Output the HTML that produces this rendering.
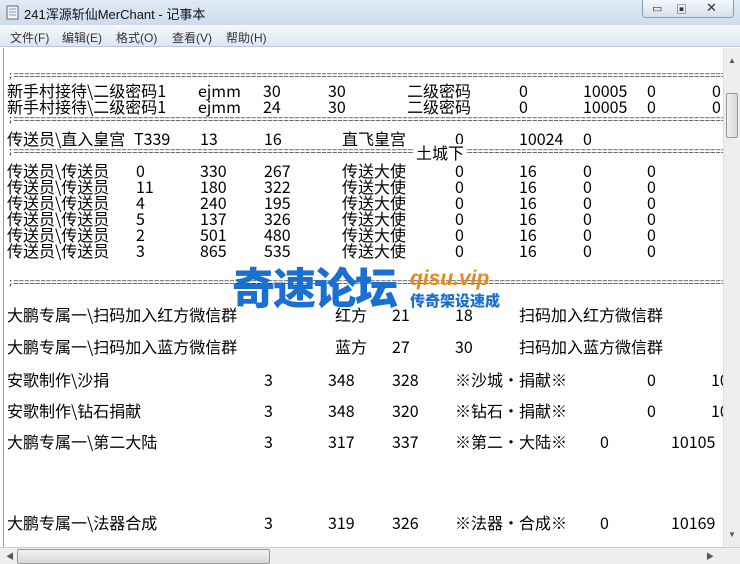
<!DOCTYPE html>
<html><head><meta charset="utf-8"><style>
*{margin:0;padding:0;box-sizing:border-box}
body{width:740px;height:564px;overflow:hidden;background:#fff;position:relative;font-family:"Liberation Sans","Noto Sans CJK SC",sans-serif}
#title{position:absolute;left:0;top:0;width:740px;height:25px;background:linear-gradient(#dfeaf5,#cddcec);}
#title .t{position:absolute;left:24px;top:4px;font-size:13px;color:#111}
#menu{position:absolute;left:0;top:25px;width:740px;height:22px;background:linear-gradient(#f5f8fc,#dde6f1);border-bottom:1px solid #b9c7d8}
#menu span{position:absolute;top:4px;font-size:12px;color:#333}
#edit{position:absolute;left:3px;top:48px;width:720px;height:499px;background:#fff;border-left:1px solid #999;overflow:hidden}
.r{position:absolute;font-family:"Noto Sans CJK SC","WenQuanYi Zen Hei",sans-serif;font-size:16px;line-height:16px;color:#000;white-space:nowrap;font-weight:400}
.eq{position:absolute;left:4px;width:716px;font-family:"Liberation Mono",monospace;font-size:9px;line-height:8px;letter-spacing:0;overflow:hidden;white-space:nowrap;color:#111}
#vs{position:absolute;left:723px;top:48px;width:17px;height:499px;background:#eee;border-left:1px solid #ddd}
#hs{position:absolute;left:0;top:547px;width:740px;height:17px;background:#eee;border-top:1px solid #ccc}
</style></head><body>
<div id="title"><svg style="position:absolute;left:6px;top:5px" width="13" height="15"><rect x="1" y="1" width="11" height="13" fill="#f4f4f4" stroke="#667"/><path d="M3 4h7M3 7h7M3 10h7" stroke="#89a"/></svg><span class="t">241浑源斩仙MerChant - 记事本</span>
<div style="position:absolute;left:642px;top:0;width:92px;height:18px;border:1px solid #8a9bb0;border-top:none;border-radius:0 0 4px 4px;background:linear-gradient(#f4f7fb,#d8e2ee)"></div>
<span style="position:absolute;left:652px;top:2px;font-size:11px;color:#333">▭</span><span style="position:absolute;left:676px;top:1px;font-size:11px;color:#333">▣</span><span style="position:absolute;left:706px;top:0px;font-size:13px;color:#333">✕</span></div>
<div id="menu"><span style="left:10px">文件(F)</span><span style="left:62px">编辑(E)</span><span style="left:116px">格式(O)</span><span style="left:172px">查看(V)</span><span style="left:226px">帮助(H)</span></div>
<div id="edit">
<div class="eq" style="top:24px">;==================================================================================================================================================</div>
<div class="r" style="left:3px;top:34px">新手村接待\二级密码1</div><div class="r" style="left:194px;top:34px">ejmm</div><div class="r" style="left:259px;top:34px">30</div><div class="r" style="left:324px;top:34px">30</div><div class="r" style="left:403px;top:34px">二级密码</div><div class="r" style="left:515px;top:34px">0</div><div class="r" style="left:579px;top:34px">10005</div><div class="r" style="left:643px;top:34px">0</div><div class="r" style="left:708px;top:34px">0</div>
<div class="r" style="left:3px;top:50px">新手村接待\二级密码1</div><div class="r" style="left:194px;top:50px">ejmm</div><div class="r" style="left:259px;top:50px">24</div><div class="r" style="left:324px;top:50px">30</div><div class="r" style="left:403px;top:50px">二级密码</div><div class="r" style="left:515px;top:50px">0</div><div class="r" style="left:579px;top:50px">10005</div><div class="r" style="left:643px;top:50px">0</div><div class="r" style="left:708px;top:50px">0</div>
<div class="eq" style="top:68px">;==================================================================================================================================================</div>
<div class="r" style="left:3px;top:82px">传送员\直入皇宫</div><div class="r" style="left:130px;top:82px">T339</div><div class="r" style="left:196px;top:82px">13</div><div class="r" style="left:260px;top:82px">16</div><div class="r" style="left:338px;top:82px">直飞皇宫</div><div class="r" style="left:451px;top:82px">0</div><div class="r" style="left:515px;top:82px">10024</div><div class="r" style="left:579px;top:82px">0</div>
<div class="eq" style="top:100px">;==================================================================================================================================================</div>
<div class="r" style="left:410px;top:96px;background:#fff;padding:0 2px">土城下</div>
<script>
var d=[[0,330,267],[11,180,322],[4,240,195],[5,137,326],[2,501,480],[3,865,535]],h='';
d.forEach(function(a,i){var t=114+i*16;h+='<div class="r" style="left:3px;top:'+t+'px">传送员\\传送员</div><div class="r" style="left:132px;top:'+t+'px">'+a[0]+'</div><div class="r" style="left:196px;top:'+t+'px">'+a[1]+'</div><div class="r" style="left:260px;top:'+t+'px">'+a[2]+'</div><div class="r" style="left:338px;top:'+t+'px">传送大使</div><div class="r" style="left:451px;top:'+t+'px">0</div><div class="r" style="left:515px;top:'+t+'px">16</div><div class="r" style="left:579px;top:'+t+'px">0</div><div class="r" style="left:643px;top:'+t+'px">0</div>';});
document.write(h);
</script>
<div class="eq" style="top:231px">;==================================================================================================================================================</div>
<div class="r" style="left:3px;top:258px">大鹏专属一\扫码加入红方微信群</div><div class="r" style="left:331px;top:258px">红方</div><div class="r" style="left:388px;top:258px">21</div><div class="r" style="left:451px;top:258px">18</div><div class="r" style="left:515px;top:258px">扫码加入红方微信群</div>
<div class="r" style="left:3px;top:290px">大鹏专属一\扫码加入蓝方微信群</div><div class="r" style="left:331px;top:290px">蓝方</div><div class="r" style="left:388px;top:290px">27</div><div class="r" style="left:451px;top:290px">30</div><div class="r" style="left:515px;top:290px">扫码加入蓝方微信群</div>
<div class="r" style="left:3px;top:323px">安歌制作\沙捐</div><div class="r" style="left:260px;top:323px">3</div><div class="r" style="left:324px;top:323px">348</div><div class="r" style="left:388px;top:323px">328</div><div class="r" style="left:451px;top:323px">※沙城·捐献※</div><div class="r" style="left:643px;top:323px">0</div><div class="r" style="left:707px;top:323px">10</div>
<div class="r" style="left:3px;top:354px">安歌制作\钻石捐献</div><div class="r" style="left:260px;top:354px">3</div><div class="r" style="left:324px;top:354px">348</div><div class="r" style="left:388px;top:354px">320</div><div class="r" style="left:451px;top:354px">※钻石·捐献※</div><div class="r" style="left:643px;top:354px">0</div><div class="r" style="left:707px;top:354px">10</div>
<div class="r" style="left:3px;top:385px">大鹏专属一\第二大陆</div><div class="r" style="left:260px;top:385px">3</div><div class="r" style="left:324px;top:385px">317</div><div class="r" style="left:388px;top:385px">337</div><div class="r" style="left:451px;top:385px">※第二·大陆※</div><div class="r" style="left:596px;top:385px">0</div><div class="r" style="left:667px;top:385px">10105</div>
<div class="r" style="left:3px;top:466px">大鹏专属一\法器合成</div><div class="r" style="left:260px;top:466px">3</div><div class="r" style="left:324px;top:466px">319</div><div class="r" style="left:388px;top:466px">326</div><div class="r" style="left:451px;top:466px">※法器·合成※</div><div class="r" style="left:596px;top:466px">0</div><div class="r" style="left:667px;top:466px">10169</div>
</div>
<div style="position:absolute;left:232px;top:262px;font-family:'Noto Sans CJK SC',sans-serif;font-weight:900;font-size:43px;line-height:48px;color:#1a6fd0;letter-spacing:-2px">奇速论坛</div>
<div style="position:absolute;left:410px;top:268px;font-family:'Liberation Sans',sans-serif;font-weight:bold;font-style:italic;font-size:21px;line-height:22px;color:#e8861a">qisu.vip</div>
<div style="position:absolute;left:410px;top:292px;font-family:'Noto Sans CJK SC',sans-serif;font-weight:900;font-size:15px;line-height:17px;color:#1a6fd0">传奇架设速成</div>
<div id="vs"><div style="position:absolute;left:2px;top:45px;width:12px;height:45px;border:1px solid #999;border-radius:2px;background:linear-gradient(90deg,#f2f2f2,#d8d8d8)"></div><span style="position:absolute;left:4px;top:8px;font-size:8px;color:#555">▲</span><span style="position:absolute;left:4px;top:482px;font-size:8px;color:#555">▼</span></div>
<div id="hs"><div style="position:absolute;left:17px;top:1px;width:253px;height:15px;border:1px solid #999;border-radius:2px;background:linear-gradient(#f2f2f2,#d8d8d8)"></div><span style="position:absolute;left:6px;top:3px;font-size:8px;color:#555">◀</span><span style="position:absolute;left:706px;top:3px;font-size:8px;color:#555">▶</span></div>
</body></html>
